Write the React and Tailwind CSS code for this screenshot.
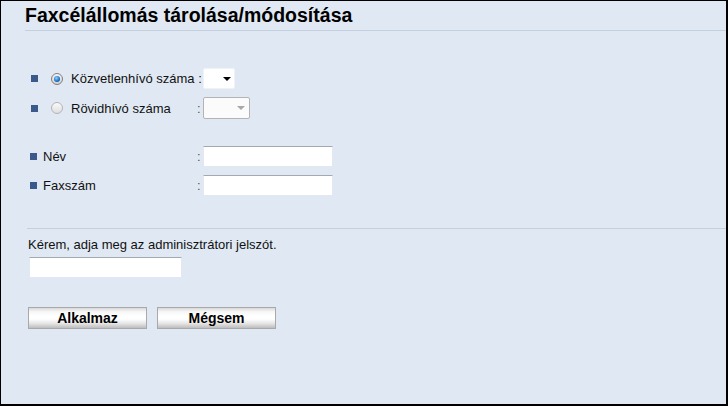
import React from "react";

function Bullet() {
  return <span className="block w-[7px] h-[7px] bg-[#3a5a8c] shrink-0" />;
}

function Radio({ checked }) {
  return checked ? (
    <span className="flex items-center justify-center w-[12px] h-[12px] rounded-full border border-[#7f7f7f] bg-[linear-gradient(to_bottom,#f4f4f4,#d0d0d0)]">
      <span className="block w-[6px] h-[6px] rounded-full bg-[radial-gradient(circle_at_40%_35%,#8fd0ff,#1a6dc4_60%,#0d4a90)]" />
    </span>
  ) : (
    <span className="block w-[12px] h-[12px] rounded-full border border-[#b4b4b4] bg-[linear-gradient(to_bottom,#fafafa,#dedede)]" />
  );
}

function Arrow({ color }) {
  return (
    <svg width="8" height="4" viewBox="0 0 8 4" className="shrink-0">
      <path d="M0 0H8L4 4Z" fill={color} />
    </svg>
  );
}

function TextInput({ w }) {
  return (
    <div className={`${w} h-[21px] bg-white border border-[#e2e8ef] border-t-[#a3a9b2] rounded-[1px]`} />
  );
}

function Button({ children }) {
  return (
    <button className="w-[119px] h-[22px] border border-[#a9a9a9] bg-[linear-gradient(to_bottom,#d8d8d8_0%,#f6f6f6_18%,#ffffff_40%,#ffffff_55%,#e4e4e4_78%,#bdbdbd_100%)] text-[14px] font-bold text-black leading-[20px] flex items-center justify-center">
      {children}
    </button>
  );
}

export default function App() {
  return (
    <div className="w-[728px] h-[406px] border-l border-t border-r-2 border-b-2 border-black bg-[#e0e9f3] font-['Liberation_Sans',Arial,sans-serif] text-[13px] text-[#111] flex flex-col">
      <div className="ml-[24px] h-[30px] pt-[3px] border-b border-[#c2d0df]">
        <h1 className="text-[19.5px] leading-[22px] font-bold text-black whitespace-nowrap">Faxcélállomás tárolása/módosítása</h1>
      </div>

      <div className="mt-[37px] flex flex-col gap-[8px]">
        <div className="flex items-center h-[21px] pl-[30px]">
          <span className="w-[20px] flex items-center"><Bullet /></span>
          <span className="w-[20px] flex items-center"><Radio checked /></span>
          <span className="w-[126px] whitespace-nowrap leading-[15px]">Közvetlenhívó száma :</span>
          <span className="w-[6px]" />
          <div className="w-[32px] h-[21px] bg-white border border-[#f0f2f5] rounded-[2px] flex items-center justify-end pr-[3px]">
            <Arrow color="#000" />
          </div>
        </div>
        <div className="flex items-center h-[22px] pl-[30px]">
          <span className="w-[20px] flex items-center"><Bullet /></span>
          <span className="w-[20px] flex items-center"><Radio /></span>
          <span className="w-[126px] whitespace-nowrap leading-[15px]">Rövidhívó száma</span>
          <span className="w-[6px] leading-[15px] text-[#555]">:</span>
          <div className="w-[47px] h-[22px] bg-[#fbfbfb] border border-[#b4b4b4] rounded-[2px] flex items-center justify-end pr-[4px]">
            <Arrow color="#a8a8a8" />
          </div>
        </div>
      </div>

      <div className="mt-[27px] flex flex-col gap-[8px]">
        <div className="flex items-center h-[21px] pl-[29px]">
          <Bullet />
          <span className="ml-[6px] w-[154px] leading-[15px]">Név</span>
          <span className="w-[6px] leading-[15px] text-[#555]">:</span>
          <TextInput w="w-[130px]" />
        </div>
        <div className="flex items-center h-[21px] pl-[29px]">
          <Bullet />
          <span className="ml-[6px] w-[154px] leading-[15px]">Faxszám</span>
          <span className="w-[6px] leading-[15px] text-[#555]">:</span>
          <TextInput w="w-[130px]" />
        </div>
      </div>

      <div className="mt-[32px] ml-[26px] border-t border-[#c2d0df]" />

      <div className="ml-[27px] mt-[8px] leading-[15px] h-[15px]">Kérem, adja meg az adminisztrátori jelszót.</div>
      <div className="ml-[28px] mt-[5px]">
        <TextInput w="w-[153px]" />
      </div>

      <div className="ml-[27px] mt-[29px] flex gap-[10px]">
        <Button>Alkalmaz</Button>
        <Button>Mégsem</Button>
      </div>
    </div>
  );
}
